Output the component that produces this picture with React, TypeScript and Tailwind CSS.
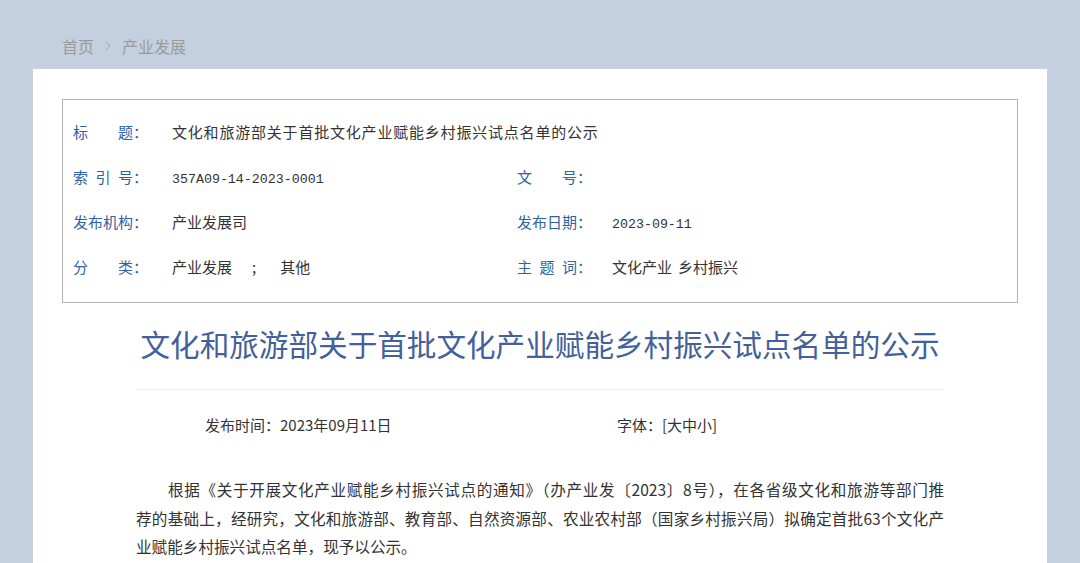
import { ChevronRight } from 'lucide-react';

const sans = "font-['Noto_Sans_CJK_SC','Noto_Sans',sans-serif]";
const mono = "font-['Liberation_Mono','Noto_Sans_CJK_SC',monospace]";

function Label({ chars, narrow }: { chars: string[]; narrow?: boolean }) {
  return (
    <span className={`flex items-center text-[#2e63a6] text-[15px] shrink-0 ${narrow ? 'w-[95px]' : 'w-[99px]'}`}>
      <span className="flex justify-between w-[60px]">
        {chars.map((c, i) => (
          <span key={i}>{c}</span>
        ))}
      </span>
      <span>：</span>
    </span>
  );
}

function Field({ chars, narrow, children }: { chars: string[]; narrow?: boolean; children?: React.ReactNode }) {
  return (
    <div className="flex items-center h-[45px]">
      <Label chars={chars} narrow={narrow} />
      <span className="text-[#333] text-[15px]">{children}</span>
    </div>
  );
}

export default function App() {
  return (
    <div className={`min-h-screen bg-[#c4d0e0] ${sans}`}>
      <div className="w-[1014px] mx-auto">
        {/* breadcrumb */}
        <div className="h-[69px] flex items-center pt-[22px] pl-[29px] text-[16px] text-[#9a9a9a] gap-[6px]">
          <span>首页</span>
          <ChevronRight className="h-4 w-4" strokeWidth={1.2} />
          <span>产业发展</span>
        </div>

        <div className="bg-white px-[29px] pt-[30px] pb-10">
          {/* info table */}
          <div className="border border-[#b3b3b3] pl-[10px] pt-[10px] pb-[12px]">
            <Field chars={['标', '题']}>
              <span className="tracking-[0.8px]">文化和旅游部关于首批文化产业赋能乡村振兴试点名单的公示</span>
            </Field>
            <div className="grid grid-cols-[444px_1fr]">
              <Field chars={['索', '引', '号']}>
                <span className={`${mono} text-[13.3px]`}>357A09-14-2023-0001</span>
              </Field>
              <Field chars={['文', '号']} narrow />
              <Field chars={['发', '布', '机', '构']}>产业发展司</Field>
              <Field chars={['发', '布', '日', '期']} narrow>
                <span className={`${mono} text-[13.3px]`}>2023-09-11</span>
              </Field>
              <Field chars={['分', '类']}>
                产业发展<span className="ml-[20px] mr-[24px]">;</span>其他
              </Field>
              <Field chars={['主', '题', '词']} narrow>
                文化产业<span className="ml-[6px]">乡村振兴</span>
              </Field>
            </div>
          </div>

          {/* article */}
          <div className="w-[808px] mx-auto">
            <h1 className="text-center whitespace-nowrap text-[29.6px] leading-[40px] text-[#42609a] pt-[21px] pb-[25px] border-b border-[#ececec]">
              文化和旅游部关于首批文化产业赋能乡村振兴试点名单的公示
            </h1>
            <div className="flex text-[15px] text-[#333] h-[70px] items-center">
              <span className="pl-[69px] w-[481px]">发布时间：2023年09月11日</span>
              <span>字体：[大中小]</span>
            </div>
            <div className="text-[15.6px] leading-[28.5px] text-[#333] pt-[15px]">
              <div className="text-justify [text-align-last:justify] pl-[32px]">
                根据《关于开展文化产业赋能乡村振兴试点的通知》（办产业发〔2023〕8号），在各省级文化和旅游等部门推
              </div>
              <div className="text-justify [text-align-last:justify]">
                荐的基础上，经研究，文化和旅游部、教育部、自然资源部、农业农村部（国家乡村振兴局）拟确定首批63个文化产
              </div>
              <div>业赋能乡村振兴试点名单，现予以公示。</div>
            </div>
          </div>
        </div>
      </div>
    </div>
  );
}
